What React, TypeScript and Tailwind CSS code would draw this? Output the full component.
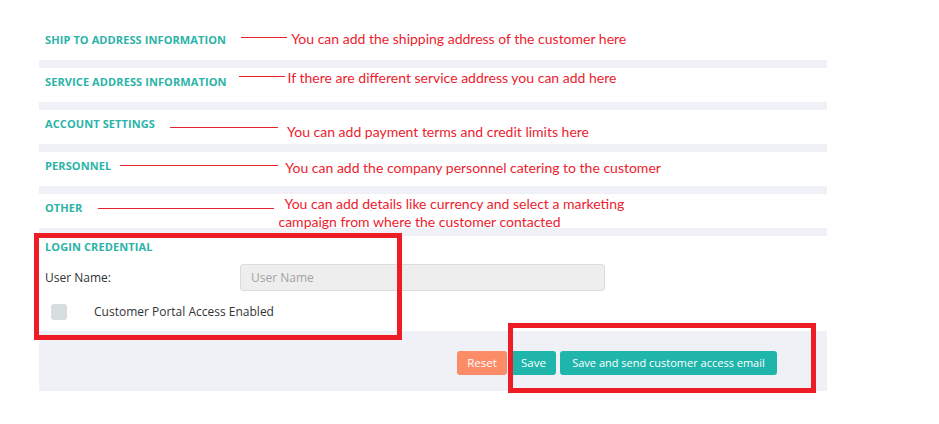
import React from "react";

// annotation rows: heading, red pointer line, note
const sections = [
  {
    title: "SHIP TO ADDRESS INFORMATION",
    line: "ml-[15px] mt-[11px] w-[46px]",
    note: "ml-[4px] mt-[4px]",
    text: "You can add the shipping address of the customer here",
  },
  {
    title: "SERVICE ADDRESS INFORMATION",
    line: "ml-[12px] mt-[8px] w-[46px]",
    note: "ml-[3px] mt-[1px]",
    text: "If there are different service address you can add here",
  },
  {
    title: "ACCOUNT SETTINGS",
    line: "ml-[15px] mt-[17px] w-[108px]",
    note: "ml-[9px] mt-[13px]",
    text: "You can add payment terms and credit limits here",
  },
  {
    title: "PERSONNEL",
    line: "ml-[9px] mt-[13px] w-[158px]",
    note: "ml-[7px] mt-[7px]",
    text: "You can add the company personnel catering to the customer",
  },
  {
    title: "OTHER",
    line: "ml-[16px] mt-[14px] w-[176px]",
    note: "ml-[4px] mt-[1px] indent-[6px]",
    text: "You can add details like currency and select a marketing\ncampaign from where the customer contacted",
  },
];

export default function App() {
  return (
    <div className="relative w-[939px] h-[424px] bg-white overflow-hidden font-['Open_Sans',sans-serif]">
      {/* PANEL */}
      <div className="ml-[39px] mt-[26px] w-[788px] flex flex-col gap-[8px] bg-[#f0f1f6]">
        {sections.map((s) => (
          <div key={s.title} className="h-[34px] bg-white px-[6px] flex items-start">
            <h3 className="mt-[6px] shrink-0 text-[11px] leading-[16px] font-bold tracking-[0.1px] text-[#2bb3a8]">
              {s.title}
            </h3>
            <div className={`h-px shrink-0 bg-[#e8202a] ${s.line}`}></div>
            <p
              className={`whitespace-pre-line font-['Lato',sans-serif] text-[14px] leading-[18px] text-[#ec1c2e] ${s.note}`}
            >
              {s.text}
            </p>
          </div>
        ))}

        {/* LOGIN CREDENTIAL */}
        <div className="h-[95px] bg-white px-[6px] pt-[3px]">
          <h3 className="text-[11px] leading-[16px] font-bold tracking-[0.1px] text-[#2bb3a8]">
            LOGIN CREDENTIAL
          </h3>
          <div className="flex items-center mt-[9px]">
            <label className="w-[195px] text-[12px] text-[#333]">User Name:</label>
            <input
              placeholder="User Name"
              disabled
              className="w-[365px] h-[27px] rounded-[3px] border border-[#dcdcdc] bg-[#eeeeee] px-[10px] text-[12px] placeholder:text-[#a3a3a3]"
            />
          </div>
          <div className="flex items-center mt-[12px] pl-[6px]">
            <span className="w-[16px] h-[16px] rounded-[3px] bg-[#d8dde0]"></span>
            <span className="ml-[27px] text-[12px] text-[#333]">
              Customer Portal Access Enabled
            </span>
          </div>
        </div>

        {/* FOOTER */}
        <div className="h-[60px] -mt-[8px] flex justify-end items-start gap-[4px] pt-[20px] pr-[50px]">
          <button className="h-[24px] w-[50px] rounded-[3px] bg-[#fc8b68] text-white text-[11.5px]">
            Reset
          </button>
          <button className="h-[24px] w-[45px] rounded-[3px] bg-[#20b5ab] text-white text-[11.5px]">
            Save
          </button>
          <button className="h-[24px] w-[217px] rounded-[3px] bg-[#20b5ab] text-white text-[11px]">
            Save and send customer access email
          </button>
        </div>
      </div>

      {/* RED HIGHLIGHT BOXES (drawn over the form) */}
      <div className="absolute left-[34px] top-[233px] w-[368px] h-[107px] border-[5px] border-[#ee1c25] pointer-events-none"></div>
      <div className="absolute left-[508px] top-[323px] w-[308px] h-[70px] border-[5px] border-[#ee1c25] pointer-events-none"></div>
    </div>
  );
}
